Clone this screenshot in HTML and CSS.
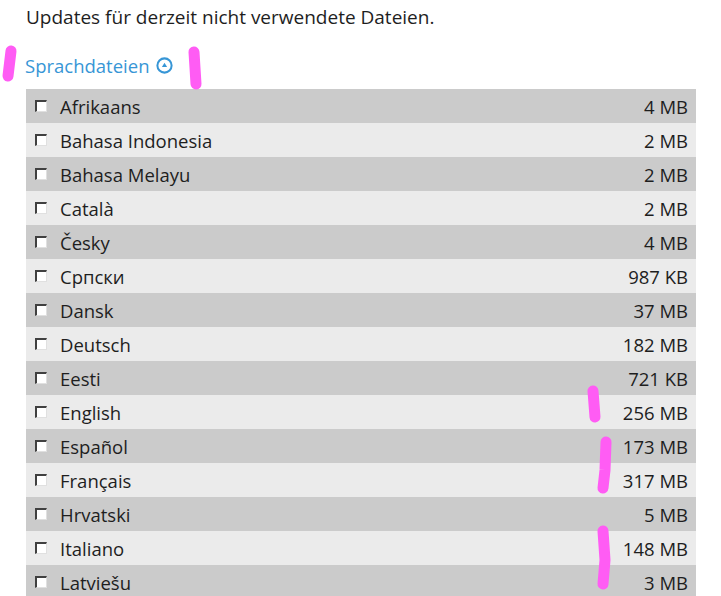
FILE: index.html
```html
<!DOCTYPE html>
<html lang="de">
  <head>
    <meta charset="UTF-8" />
    <title>Sprachdateien</title>
    <link rel="stylesheet" href="styles.css">
  </head>
  <body>
    <p class="intro">Updates für derzeit nicht verwendete Dateien.</p>

    <a class="section-link" href="#">
      Sprachdateien
      <svg class="toggle" width="17" height="17" viewBox="0 0 16 16">
        <circle cx="8" cy="8" r="6.7" fill="none" stroke="#3796d6" stroke-width="1.9" />
        <path d="M8 5.3 L10.5 9.5 L5.5 9.5 Z" fill="#3796d6" />
      </svg>
    </a>

    <div class="files">
      <label class="row"><span class="box"></span><span class="name">Afrikaans</span><span class="size">4 MB</span></label>
      <label class="row"><span class="box"></span><span class="name">Bahasa Indonesia</span><span class="size">2 MB</span></label>
      <label class="row"><span class="box"></span><span class="name">Bahasa Melayu</span><span class="size">2 MB</span></label>
      <label class="row"><span class="box"></span><span class="name">Català</span><span class="size">2 MB</span></label>
      <label class="row"><span class="box"></span><span class="name">Česky</span><span class="size">4 MB</span></label>
      <label class="row"><span class="box"></span><span class="name">Српски</span><span class="size">987 KB</span></label>
      <label class="row"><span class="box"></span><span class="name">Dansk</span><span class="size">37 MB</span></label>
      <label class="row"><span class="box"></span><span class="name">Deutsch</span><span class="size">182 MB</span></label>
      <label class="row"><span class="box"></span><span class="name">Eesti</span><span class="size">721 KB</span></label>
      <label class="row"><span class="box"></span><span class="name">English</span><span class="size">256 MB</span></label>
      <label class="row"><span class="box"></span><span class="name">Español</span><span class="size">173 MB</span></label>
      <label class="row"><span class="box"></span><span class="name">Français</span><span class="size">317 MB</span></label>
      <label class="row"><span class="box"></span><span class="name">Hrvatski</span><span class="size">5 MB</span></label>
      <label class="row"><span class="box"></span><span class="name">Italiano</span><span class="size">148 MB</span></label>
      <label class="row"><span class="box"></span><span class="name">Latviešu</span><span class="size">3 MB</span></label>
    </div>

    <!-- highlighter marks drawn over the screenshot -->
    <svg class="marks" width="721" height="596" viewBox="0 0 721 596">
      <g fill="none" stroke="#ff5cf4" stroke-width="11" stroke-linecap="round">
        <path d="M11 51 L8 76" />
        <path d="M194 52 L196 84" />
        <path d="M593 391 L595 417" />
        <path d="M606 442 L605 470 L603 488" />
        <path d="M603 531 L605 560 L603 584" />
      </g>
    </svg>
  </body>
</html>
```

FILE: styles.css
```css
body {
  margin: 0;
  padding: 0 25px 0 26px;
  background: #fff;
  font-family: "Open Sans", "Noto Sans", sans-serif;
  color: #1e1e1e;
  width: 670px;
}

.intro {
  margin: 0;
  padding-top: 2px;
  font-size: 19px;
  line-height: 30px;
}

.section-link {
  display: flex;
  align-items: center;
  gap: 6px;
  margin-top: 16px;
  height: 34px;
  color: #3796d6;
  text-decoration: none;
  font-size: 18.5px;
  padding-bottom: 7px;
  margin-left: -1px;
}

.files {
  display: flex;
  flex-direction: column;
}

.row {
  display: flex;
  align-items: center;
  height: 34px;
  padding: 0 8px 0 9px;
  background: #cbcbcb;
  font-size: 18.5px;
}

.row:nth-child(even) {
  background: #ebebeb;
}

.box {
  width: 9px;
  height: 9px;
  border-top: 2px solid #404040;
  border-left: 2px solid #404040;
  border-right: 1px solid #e0e0e0;
  border-bottom: 1px solid #e0e0e0;
  background: #fff;
  margin-right: 13px;
}

.name {
  flex: 1;
}

.size {
  text-align: right;
}

.marks {
  position: absolute;
  left: 0;
  top: 0;
  pointer-events: none;
}
```
